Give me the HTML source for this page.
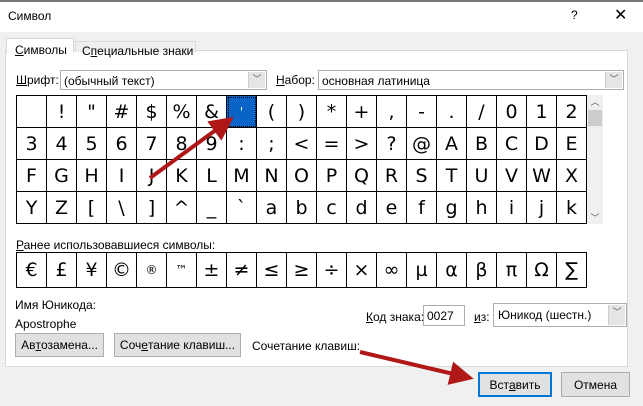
<!DOCTYPE html>
<html><head><meta charset="utf-8"><style>
*{box-sizing:border-box;margin:0;padding:0}
body{width:643px;height:406px;background:#f0f0f0;font-family:"Liberation Sans","DejaVu Sans",sans-serif;font-size:11px;color:#000;position:relative;overflow:hidden}
.a{position:absolute}
.grid{display:grid;grid-template-columns:repeat(19,30px);border-left:1px solid #000;border-top:1px solid #000}
.grid div{border-right:1px solid #000;border-bottom:1px solid #000;height:32px;display:flex;align-items:center;justify-content:center;font-size:19px;font-family:"DejaVu Sans","Liberation Sans",sans-serif}
.main div{height:32px}
.rec div{height:35px}
.btn{background:#e1e1e1;border:1px solid #adadad;display:flex;align-items:center;justify-content:center;font-size:11px}
.dd{background:#fff;border:1px solid #adadad}
.arr{position:absolute;right:1px;top:1px;bottom:1px;width:17px;background:#e5e5e5;border-left:1px solid #ccc;font-size:9px;color:#555;text-align:center}
u{text-decoration:underline}
</style></head><body>
<div class="a" style="left:0;top:0;width:643px;height:2px;background:#777"></div>
<div class="a" style="left:0;top:2px;width:643px;height:30px;background:#fff"></div>
<div class="a" style="left:8px;top:9px;font-size:12px">Символ</div>
<div class="a" style="left:571px;top:8px;font-size:12px">?</div>
<div class="a" style="left:614px;top:5px;font-size:16px">✕</div>
<div class="a" style="left:5px;top:50px;width:623px;height:317px;background:#fff;border:1px solid #d9d9d9"></div>
<div class="a" style="left:6px;top:38px;width:68px;background:#fff;border:1px solid #d9d9d9;border-bottom:none;height:15px"></div>
<div class="a" style="left:15px;top:43px;font-size:12px"><u>С</u>имволы</div>
<div class="a" style="left:75px;top:41px;width:121px;background:#f0f0f0;border:1px solid #d9d9d9;border-bottom:none;height:11px"></div>
<div class="a" style="left:82px;top:44px;font-size:12px">С<u>п</u>ециальные знаки</div>
<div class="a" style="left:16px;top:73px;font-size:12px"><u>Ш</u>рифт:</div>
<div class="a dd" style="left:60px;top:70px;width:207px;height:20px"><span style="position:absolute;left:3px;top:3px;font-size:12px">(обычный текст)</span><div class="arr">﹀</div></div>
<div class="a" style="left:276px;top:73px;font-size:12px"><u>Н</u>абор:</div>
<div class="a dd" style="left:318px;top:70px;width:306px;height:20px"><span style="position:absolute;left:3px;top:3px;font-size:12px">основная латиница</span><div class="arr">﹀</div></div>
<div class="a grid main" style="left:16px;top:95px">
<div></div><div>!</div><div>"</div><div>#</div><div>$</div><div>%</div><div>&amp;</div><div style="background:#0a64c8;color:#fff;font-size:12px;outline:1px dotted #000;outline-offset:-2px">'</div><div>(</div><div>)</div><div>*</div><div>+</div><div>,</div><div>-</div><div>.</div><div>/</div><div>0</div><div>1</div><div>2</div>
<div>3</div><div>4</div><div>5</div><div>6</div><div>7</div><div>8</div><div>9</div><div>:</div><div>;</div><div>&lt;</div><div>=</div><div>&gt;</div><div>?</div><div>@</div><div>A</div><div>B</div><div>C</div><div>D</div><div>E</div>
<div>F</div><div>G</div><div>H</div><div>I</div><div>J</div><div>K</div><div>L</div><div>M</div><div>N</div><div>O</div><div>P</div><div>Q</div><div>R</div><div>S</div><div>T</div><div>U</div><div>V</div><div>W</div><div>X</div>
<div>Y</div><div>Z</div><div>[</div><div>\</div><div>]</div><div>^</div><div>_</div><div>`</div><div>a</div><div>b</div><div>c</div><div>d</div><div>e</div><div>f</div><div>g</div><div>h</div><div>i</div><div>j</div><div>k</div>
</div>
<div class="a" style="left:587px;top:95px;width:16px;height:129px;background:#f0f0f0"><div style="text-align:center;font-size:9px;color:#555">︿</div><div style="margin:2px 1px;height:16px;background:#cdcdcd"></div><div style="position:absolute;bottom:0;width:16px;text-align:center;font-size:9px;color:#555">﹀</div></div>
<div class="a" style="left:16px;top:238px;font-size:12px"><u>Р</u>анее использовавшиеся символы:</div>
<div class="a grid rec" style="left:16px;top:252px">
<div>€</div><div>£</div><div>¥</div><div>©</div><div style="font-size:12px">®</div><div style="font-size:12px">™</div><div>±</div><div>≠</div><div>≤</div><div>≥</div><div>÷</div><div>×</div><div>∞</div><div>µ</div><div>α</div><div>β</div><div>π</div><div>Ω</div><div>∑</div>
</div>
<div class="a" style="left:15px;top:298px;font-size:12px">Имя Юникода:</div>
<div class="a" style="left:15px;top:317px;font-size:12px">Apostrophe</div>
<div class="a" style="left:366px;top:310px;font-size:12px"><u>К</u>од знака:</div>
<div class="a dd" style="left:423px;top:305px;width:42px;height:21px"><span style="position:absolute;left:3px;top:3px;font-size:12px">0027</span></div>
<div class="a" style="left:474px;top:310px;font-size:12px"><u>и</u>з:</div>
<div class="a dd" style="left:493px;top:303px;width:134px;height:24px"><span style="position:absolute;left:4px;top:4px;font-size:12px">Юникод (шестн.)</span><div class="arr">﹀</div></div>
<div class="a btn" style="left:15px;top:333px;width:89px;height:24px;font-size:12px">Ав<u>т</u>озамена...</div>
<div class="a btn" style="left:114px;top:333px;width:127px;height:24px;font-size:12px">Соч<u>е</u>тание клавиш...</div>
<div class="a" style="left:252px;top:339px;font-size:12px">Сочетание клавиш:</div>
<div class="a btn" style="left:478px;top:372px;width:74px;height:25px;border:2px solid #0078d7;font-size:12px">Вст<u>а</u>вить</div>
<div class="a btn" style="left:561px;top:372px;width:69px;height:25px;font-size:12px">Отмена</div>
<svg class="a" style="left:0;top:0" width="643" height="406">
<defs><marker id="m" markerWidth="6" markerHeight="6" refX="3" refY="3" orient="auto" markerUnits="strokeWidth"><path d="M0,0 L6,3 L0,6 Z" fill="#b01818"/></marker></defs>
<line x1="150" y1="178" x2="224" y2="124" stroke="#b01818" stroke-width="4" marker-end="url(#m)"/>
<line x1="360" y1="352" x2="462" y2="376" stroke="#b01818" stroke-width="4" marker-end="url(#m)"/>
</svg>
</body></html>
